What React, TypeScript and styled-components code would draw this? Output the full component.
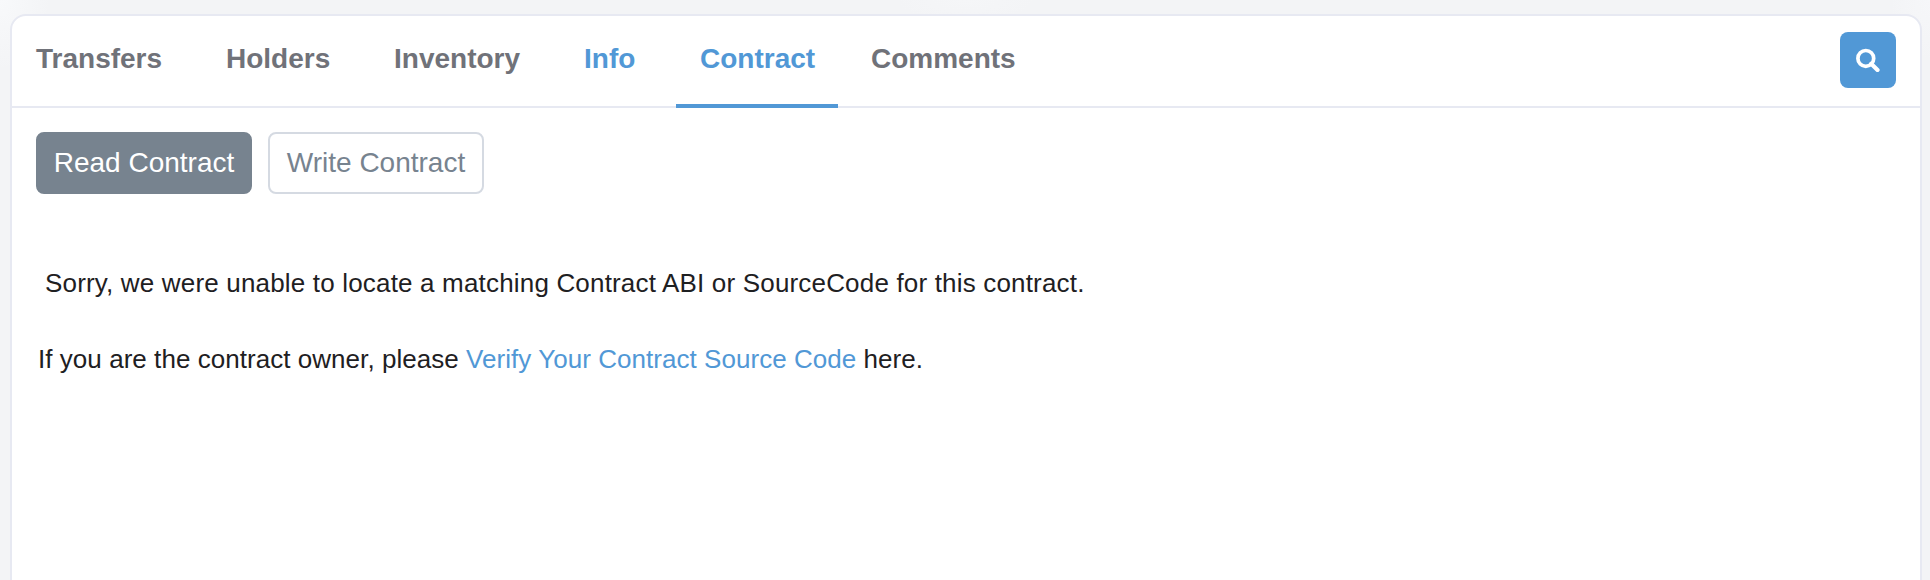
import React from 'react';
import styled, { createGlobalStyle } from 'styled-components';

const GlobalStyle = createGlobalStyle`
  * { box-sizing: border-box; }
  body {
    margin: 0;
    height: 580px;
    overflow: hidden;
    background: #f3f4f6;
    font-family: "Liberation Sans", Arial, sans-serif;
    color: #1e2022;
  }
`;

const Page = styled.main`
  height: 580px;
  padding: 14px 8px 0 10px;
  overflow: hidden;
  background: radial-gradient(ellipse 70px 22px at 965px 0, #f5f6f8, transparent),
    radial-gradient(ellipse 50px 70px at 0 0, #f8f9fb, transparent),
    radial-gradient(ellipse 40px 60px at 100% 0, #f6f7f9, transparent),
    #f3f4f6;
`;

const Card = styled.section`
  height: 620px;
  background: #fff;
  border: 2px solid #e7e9f2;
  border-radius: 16px;
`;

const Header = styled.header`
  display: flex;
  align-items: flex-start;
  justify-content: space-between;
  height: 92px;
  padding-right: 24px;
  border-bottom: 2px solid #e7e9f2;
`;

const Tabs = styled.nav`
  display: flex;
`;

const Tab = styled.a<{ $tone?: string; $active?: boolean; $width: number; $gap: number }>`
  width: ${(p) => p.$width}px;
  height: 92px;
  margin-right: ${(p) => p.$gap}px;
  padding: 27px 0 0 24px;
  border-bottom: 4px solid ${(p) => (p.$active ? '#5198d6' : 'transparent')};
  color: ${(p) => p.$tone ?? '#707279'};
  font-size: 28px;
  font-weight: 700;
  line-height: 32px;
  white-space: nowrap;
`;

const SearchButton = styled.button`
  display: flex;
  align-items: center;
  justify-content: center;
  width: 56px;
  height: 56px;
  margin-top: 16px;
  padding: 0;
  border: 0;
  border-radius: 8px;
  background: #5198d6;
`;

const Actions = styled.div`
  display: flex;
  gap: 16px;
  padding: 24px 24px 0;
`;

const ActionButton = styled.button<{ $filled?: boolean }>`
  width: 216px;
  height: 62px;
  padding: 0;
  border: 2px solid ${(p) => (p.$filled ? '#77838f' : '#d5dae2')};
  border-radius: 8px;
  background: ${(p) => (p.$filled ? '#77838f' : '#fff')};
  color: ${(p) => (p.$filled ? '#fff' : '#77838f')};
  font: 28px/32px "Liberation Sans", Arial, sans-serif;
  white-space: nowrap;
`;

const Message = styled.div`
  padding: 74px 24px 0 26px;
  font-size: 26px;
  line-height: 30px;
`;

const Line = styled.p<{ $indent?: number; $tracking: number }>`
  margin: 0 0 46px;
  padding-left: ${(p) => p.$indent ?? 0}px;
  letter-spacing: ${(p) => p.$tracking}px;
  white-space: nowrap;
`;

const Link = styled.a`
  color: #5198d6;
`;

const tabs = [
  { label: 'Transfers', width: 174, gap: 16 },
  { label: 'Holders', width: 152, gap: 16 },
  { label: 'Inventory', width: 174, gap: 16 },
  { label: 'Info', width: 100, gap: 16, tone: '#5198d6' },
  { label: 'Contract', width: 162, gap: 9, tone: '#5198d6', active: true },
  { label: 'Comments', width: 192, gap: 0 },
];

export default function App() {
  return (
    <>
      <GlobalStyle />
      <Page>
        <Card>
          <Header>
            <Tabs>
              {tabs.map((t) => (
                <Tab key={t.label} $width={t.width} $gap={t.gap} $tone={t.tone} $active={t.active}>
                  {t.label}
                </Tab>
              ))}
            </Tabs>
            <SearchButton aria-label="Search">
              <svg width="24" height="24" viewBox="0 0 24 24" fill="none" stroke="#fff">
                <circle cx="9.8" cy="10.4" r="7.9" strokeWidth="3.7" />
                <path d="M15.2 15.8 21.5 22" strokeWidth="4.2" strokeLinecap="round" />
              </svg>
            </SearchButton>
          </Header>
          <Actions>
            <ActionButton $filled>Read Contract</ActionButton>
            <ActionButton>Write Contract</ActionButton>
          </Actions>
          <Message>
            <Line $indent={7} $tracking={0.175}>
              Sorry, we were unable to locate a matching Contract ABI or SourceCode for this contract.
            </Line>
            <Line $tracking={0.045}>
              If you are the contract owner, please <Link>Verify Your Contract Source Code</Link> here.
            </Line>
          </Message>
        </Card>
      </Page>
    </>
  );
}
